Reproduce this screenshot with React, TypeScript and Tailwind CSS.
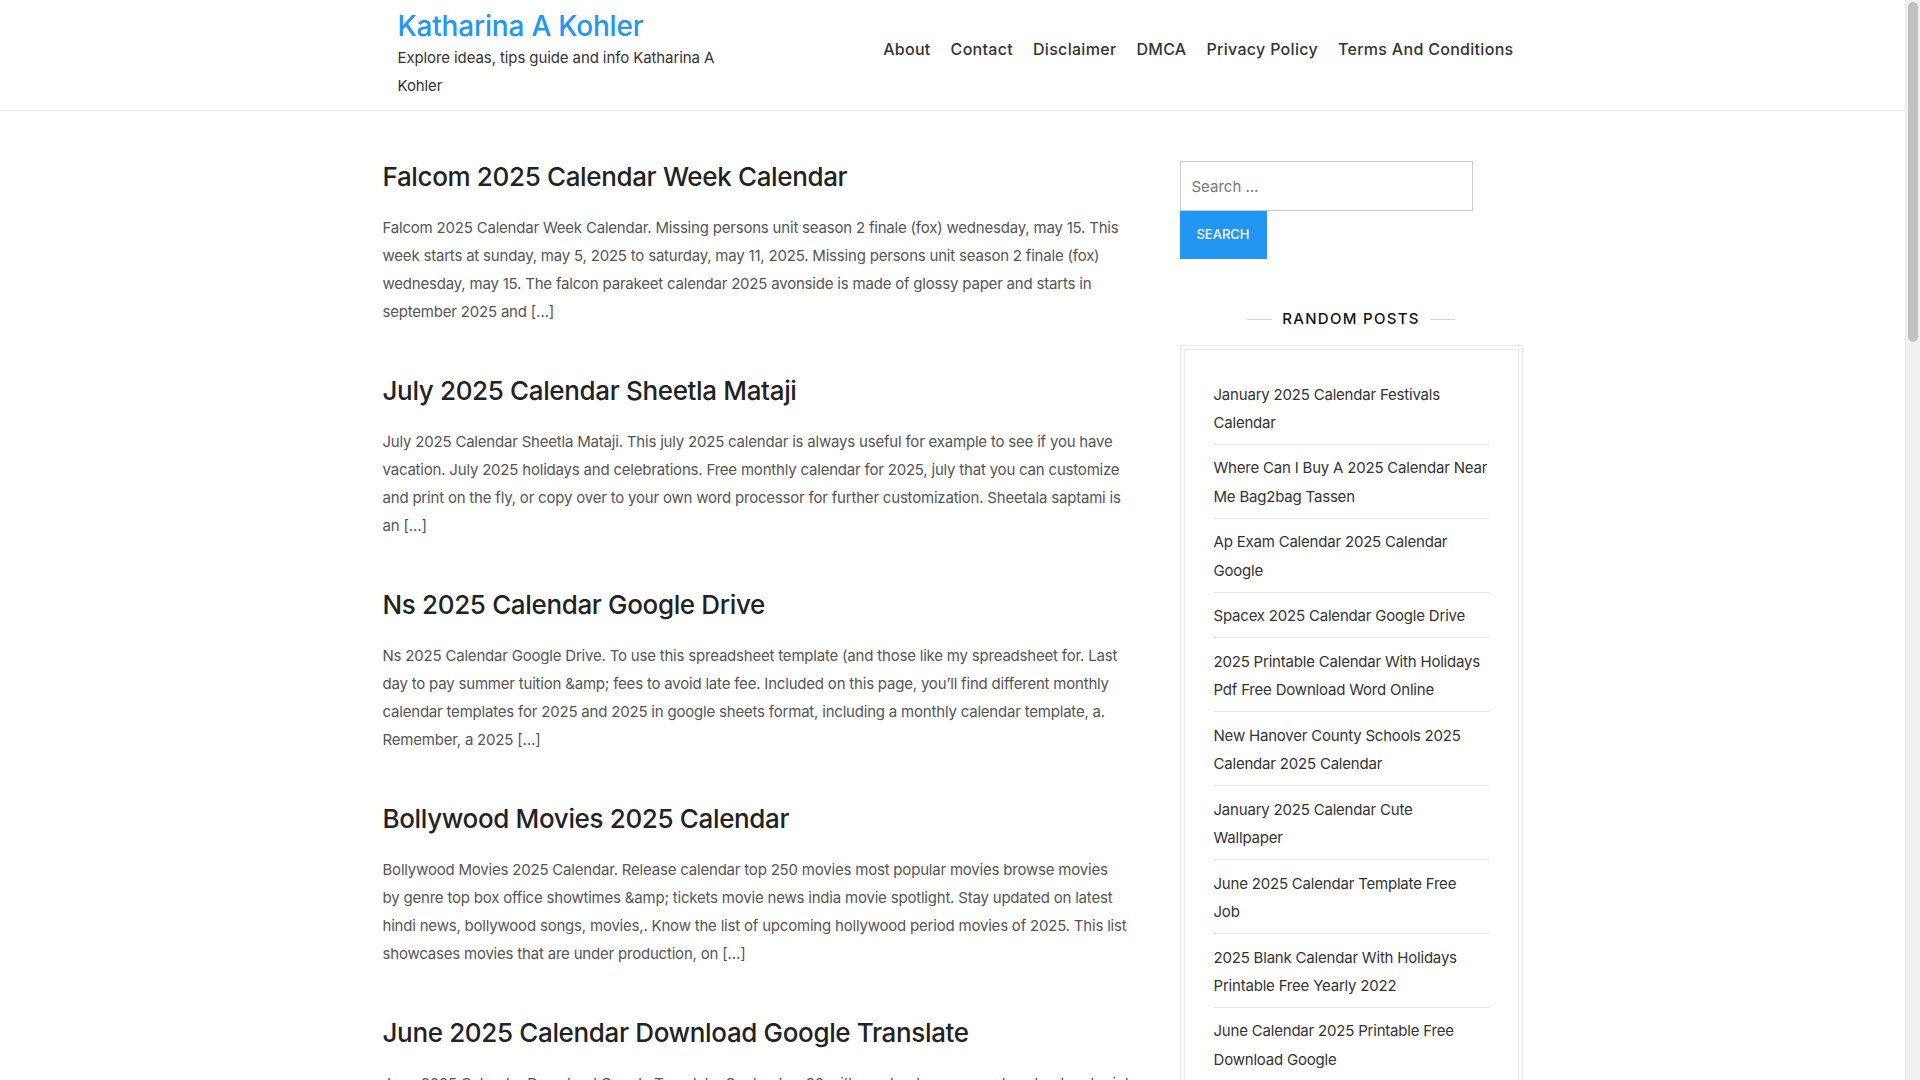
import React from 'react';

const navItems = ['About', 'Contact', 'Disclaimer', 'DMCA', 'Privacy Policy', 'Terms And Conditions'];

// excerpts kept in the lines the theme breaks them into
const posts = [
  {
    title: 'Falcom 2025 Calendar Week Calendar',
    lines: [
      'Falcom 2025 Calendar Week Calendar. Missing persons unit season 2 finale (fox) wednesday, may 15. This',
      'week starts at sunday, may 5, 2025 to saturday, may 11, 2025. Missing persons unit season 2 finale (fox)',
      'wednesday, may 15. The falcon parakeet calendar 2025 avonside is made of glossy paper and starts in',
      'september 2025 and […]',
    ],
  },
  {
    title: 'July 2025 Calendar Sheetla Mataji',
    lines: [
      'July 2025 Calendar Sheetla Mataji. This july 2025 calendar is always useful for example to see if you have',
      'vacation. July 2025 holidays and celebrations. Free monthly calendar for 2025, july that you can customize',
      'and print on the fly, or copy over to your own word processor for further customization. Sheetala saptami is',
      'an […]',
    ],
  },
  {
    title: 'Ns 2025 Calendar Google Drive',
    lines: [
      'Ns 2025 Calendar Google Drive. To use this spreadsheet template (and those like my spreadsheet for. Last',
      'day to pay summer tuition &amp; fees to avoid late fee. Included on this page, you’ll find different monthly',
      'calendar templates for 2025 and 2025 in google sheets format, including a monthly calendar template, a.',
      'Remember, a 2025 […]',
    ],
  },
  {
    title: 'Bollywood Movies 2025 Calendar',
    lines: [
      'Bollywood Movies 2025 Calendar. Release calendar top 250 movies most popular movies browse movies',
      'by genre top box office showtimes &amp; tickets movie news india movie spotlight. Stay updated on latest',
      'hindi news, bollywood songs, movies,. Know the list of upcoming hollywood period movies of 2025. This list',
      'showcases movies that are under production, on […]',
    ],
  },
  {
    title: 'June 2025 Calendar Download Google Translate',
    lines: [
      'June 2025 Calendar Download Google Translate. September 30 with a calendar you can download and print,',
      'and translate into your language. Free printable june 2025 calendar with holidays in word, excel and pdf',
      'formats, ready to use for planning […]',
    ],
  },
];

const randomPosts = [
  ['January 2025 Calendar Festivals', 'Calendar'],
  ['Where Can I Buy A 2025 Calendar Near', 'Me Bag2bag Tassen'],
  ['Ap Exam Calendar 2025 Calendar', 'Google'],
  ['Spacex 2025 Calendar Google Drive'],
  ['2025 Printable Calendar With Holidays', 'Pdf Free Download Word Online'],
  ['New Hanover County Schools 2025', 'Calendar 2025 Calendar'],
  ['January 2025 Calendar Cute', 'Wallpaper'],
  ['June 2025 Calendar Template Free', 'Job'],
  ['2025 Blank Calendar With Holidays', 'Printable Free Yearly 2022'],
  ['June Calendar 2025 Printable Free', 'Download Google'],
  ['February 2025 Calendar With Holidays', 'Printable'],
  ['2025 Calendar Printable One Page Pdf'],
];

function Lines({ lines }: { lines: string[] }) {
  return (
    <>
      {lines.map((line, i) => (
        <React.Fragment key={i}>
          {i > 0 && <br />}
          {line}
        </React.Fragment>
      ))}
    </>
  );
}

function Header() {
  return (
    <header className="border-b border-[#e8e8e8]">
      <div className="mx-auto flex w-[1140px] justify-between pl-[15px] pr-[9px]">
        <div className="w-[350px] pb-[10px] pt-[7px]">
          <a href="#" className="block text-[28px] font-medium leading-[38px] tracking-[-0.2px] text-[#2196f3]">
            Katharina A Kohler
          </a>
          <p className="-mt-[1px] text-[15px] leading-[28px] tracking-[-0.1px] text-[#333]">
            Explore ideas, tips guide and info Katharina A Kohler
          </p>
        </div>
        <nav className="pt-[37px]">
          <ul className="flex gap-[20px]">
            {navItems.map((item) => (
              <li key={item}>
                <a href="#" className="text-[16px] font-medium leading-[24px] tracking-[0.3px] text-[#333]">
                  {item}
                </a>
              </li>
            ))}
          </ul>
        </nav>
      </div>
    </header>
  );
}

function Sidebar() {
  return (
    <aside className="w-[343px] pt-[50px]">
      <form className="w-[293px]" onSubmit={(e) => e.preventDefault()}>
        <input
          type="search"
          placeholder="Search …"
          className="block h-[50px] w-full border border-[#ccc] px-[11px] text-[15px] text-[#333] outline-none placeholder:text-[#777]"
        />
        <button
          type="submit"
          className="block h-[48px] w-[87px] bg-[#2196f3] text-[13px] font-medium uppercase text-white"
        >
          Search
        </button>
      </form>

      <div className="mt-[48px] flex items-center justify-center gap-[10px]">
        <span className="h-px w-[25px] bg-[#d5d5d5]" />
        <h2 className="text-[15px] font-medium uppercase leading-[24px] tracking-[1.3px] text-[#111]">
          Random Posts
        </h2>
        <span className="h-px w-[25px] bg-[#d5d5d5]" />
      </div>

      <div className="mt-[14px] border border-[#e8e8e8] p-[3px]">
        <ul className="border border-[#e8e8e8] px-[29px] pb-[20px] pt-[21px]">
          {randomPosts.map((lines) => (
            <li key={lines.join(' ')} className="border-b border-[#e3e3e3] pb-[7px] pt-[9.5px]">
              <a
                href="#"
                className="block whitespace-nowrap text-[15px] leading-[28.2px] tracking-[-0.2px] text-[#333]"
              >
                <Lines lines={lines} />
              </a>
            </li>
          ))}
        </ul>
      </div>
    </aside>
  );
}

export default function App() {
  return (
    <div className="flex bg-white font-['Inter','Noto_Sans',sans-serif]">
      <div className="w-[1905px] shrink-0">
        <Header />
        <div className="mx-auto flex w-[1140px] justify-between">
          <main className="w-[747px] pt-[49px]">
            {posts.map((post) => (
              <article key={post.title} className="mb-[48px]">
                <h2 className="text-[26px] font-medium leading-[34px] tracking-[-0.35px] text-[#222]">
                  <a href="#">{post.title}</a>
                </h2>
                <p className="mt-[20px] whitespace-nowrap text-[15px] leading-[28px] tracking-[-0.2px] text-[#555]">
                  <Lines lines={post.lines} />
                </p>
              </article>
            ))}
          </main>
          <Sidebar />
        </div>
      </div>
      {/* page scrollbar */}
      <div className="sticky top-0 h-screen w-[15px] shrink-0 border-l border-[#e8e8e8] bg-[#f1f1f1] px-[2px] pt-[2px]">
        <div className="h-[340px] rounded-full bg-[#c1c1c1]" />
      </div>
    </div>
  );
}
